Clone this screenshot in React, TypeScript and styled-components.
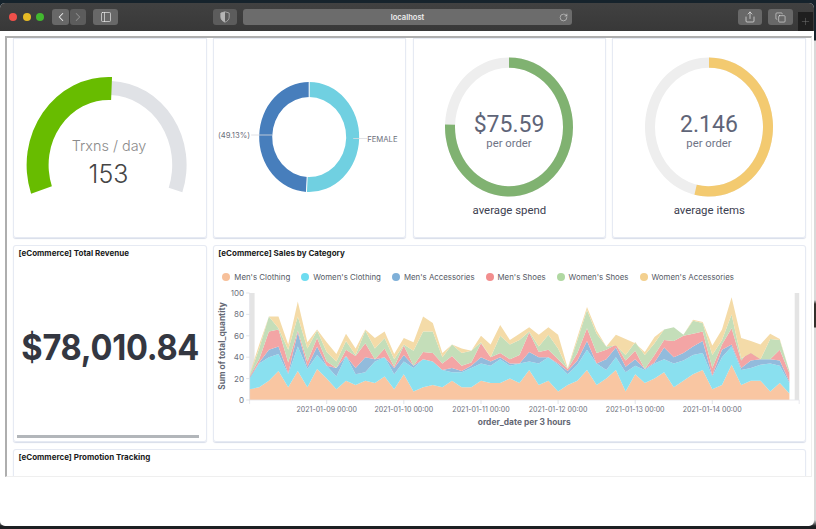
import React from "react";
import styled, { createGlobalStyle } from "styled-components";
import { ChevronLeft, ChevronRight, PanelLeft, Share, Copy, RotateCw, Plus } from "lucide-react";

const Global = createGlobalStyle`
  html, body { margin: 0; padding: 0; height: 100%; overflow: hidden; }
  body {
    background: linear-gradient(180deg, #16232c 0, #16232c 40px, #d9d9d9 41px, #d9d9d9 300px, #33302c 304px, #33302c 327px, #d9d9d9 328px, #d9d9d9 520px, #1d1f22 526px);
    font-family: "Inter", "Liberation Sans", sans-serif;
  }
  #root { height: 100%; }
`;

const Desktop = styled.div`
  width: 816px;
  height: 529px;
  padding: 3px 2px 3px 0;
  box-sizing: border-box;
`;

const Win = styled.div`
  height: 523px;
  display: flex;
  flex-direction: column;
  background: #fff;
  border-radius: 5px;
  overflow: hidden;
`;

const Toolbar = styled.header`
  height: 28px;
  flex: none;
  display: flex;
  align-items: center;
  background: linear-gradient(180deg, #414141, #383838);
  padding: 0 0 0 9px;
  box-sizing: border-box;
`;

const Light = styled.span<{ $c: string }>`
  width: 8px;
  height: 8px;
  border-radius: 50%;
  background: ${(p) => p.$c};
  margin-right: 5.5px;
  flex: none;
`;

const ToolButton = styled.button<{ $w: number; $ml?: number; $dim?: boolean }>`
  width: ${(p) => p.$w}px;
  height: 16px;
  margin: 0 0 0 ${(p) => p.$ml ?? 0}px;
  flex: none;
  padding: 0;
  border: 0;
  border-radius: 3px;
  background: ${(p) => (p.$dim ? "#5c5c5c" : "#686868")};
  color: ${(p) => (p.$dim ? "#8d8d8d" : "#f0f0f0")};
  display: flex;
  align-items: center;
  justify-content: center;
`;

const UrlBar = styled.div`
  width: 329px;
  height: 16px;
  margin-left: 6px;
  flex: none;
  border-radius: 3px;
  background: #6c6c6c;
  color: #f0f0f0;
  display: flex;
  align-items: center;
  justify-content: flex-end;
  padding-right: 4px;
  box-sizing: border-box;
  position: relative;
`;

const UrlText = styled.span`
  position: absolute;
  left: 0;
  right: 0;
  text-align: center;
  font: 600 7.6px "Inter", sans-serif;
  color: #ececec;
`;

const NewTab = styled.div`
  width: 15px;
  height: 19px;
  margin: 9px 0 0 5px;
  flex: none;
  background: #1f1f1f;
  color: #7d7d7d;
  display: flex;
  align-items: center;
  justify-content: center;
`;

const Body = styled.main`
  flex: 1;
  padding: 5px 2px 0 5px;
`;

const Frame = styled.div`
  height: 441px;
  box-sizing: border-box;
  border: 1.5px solid #efefef;
  border-top: 2px solid #aeaeae;
  border-left: 2px solid #aeaeae;
  overflow: hidden;
  padding: 0 5px 0 6px;
  display: grid;
  grid-template-columns: repeat(4, 1fr);
  grid-template-rows: 200px 197px 100px;
  column-gap: 6.33px;
  row-gap: 7px;
`;

const Card = styled.section<{ $span?: number; $open?: boolean }>`
  grid-column: span ${(p) => p.$span ?? 1};
  background: #fff;
  border-radius: ${(p) => (p.$open ? "0 0 3px 3px" : "3px")};
  box-shadow: inset 0 0 0 1px #e6eaf3, 0 1px 1px #d8dde9;
  display: flex;
  flex-direction: column;
  min-width: 0;
  position: relative;
`;

const Title = styled.h3`
  margin: 0;
  padding: 4px 5.5px 0;
  font: 700 8px/9px "Inter", sans-serif;
  color: #1a1c21;
  white-space: nowrap;
`;

const FullSvg = styled.svg`
  display: block;
  width: 100%;
  height: 100%;
`;

const RingCard = styled(Card)`
  align-items: center;
  padding-top: 19px;
`;

const RingSvg = styled.svg`
  display: block;
  width: 130px;
  height: 141px;
  flex: none;
`;

const Caption = styled.div`
  margin-top: 4.5px;
  font: 400 11.4px/14px "Roboto", sans-serif;
  color: #3c4050;
`;

const Metric = styled.div`
  flex: 1;
  display: flex;
  align-items: center;
  justify-content: center;
  color: #343741;
`;

const MetricValue = styled.span`
  font: 700 36px/1 "Inter", sans-serif;
  letter-spacing: -0.3px;
  white-space: nowrap;
  transform: scaleX(0.905);
`;

const HScroll = styled.div`
  height: 3px;
  margin: 0 8px 4px 4px;
  background: #b2b6ba;
  flex: none;
`;

const Legend = styled.ul`
  list-style: none;
  margin: 14px 0 0;
  padding: 0 0 0 9.5px;
  display: flex;
  gap: 11px;
  height: 10px;
  align-items: center;
`;

const LegendItem = styled.li`
  display: flex;
  align-items: center;
  gap: 4px;
  font: 400 7.85px/10px "Inter", sans-serif;
  color: #555a66;
  white-space: nowrap;
`;

const Dot = styled.i<{ $c: string }>`
  width: 8px;
  height: 8px;
  border-radius: 50%;
  background: ${(p) => p.$c};
`;

const PlotSvg = styled.svg`
  display: block;
  width: 593.5px;
  height: 150px;
  margin-top: 3px;
  flex: none;
`;

const GaugeLabel = styled.text`
  font: 300 14.4px "Inter", sans-serif;
  fill: #8b8b8b;
  text-anchor: middle;
`;
const GaugeValue = styled.text`
  font: 300 25px "Inter", sans-serif;
  fill: #454545;
  text-anchor: middle;
`;
const SliceLabel = styled.text`
  font: 400 7.7px "Inter", sans-serif;
  fill: #6a6e7a;
`;
const RingValue = styled.text`
  font: 400 23px "Roboto", sans-serif;
  fill: #5f6578;
  text-anchor: middle;
`;
const RingSub = styled.text`
  font: 400 11.3px "Roboto", sans-serif;
  fill: #6f7486;
  text-anchor: middle;
`;
const AxisText = styled.text<{ $anchor?: string; $size?: number }>`
  font: 400 ${(p) => p.$size ?? 8}px "Inter", sans-serif;
  fill: #6c707c;
  text-anchor: ${(p) => p.$anchor ?? "middle"};
`;
const AxisTitle = styled.text`
  font: 700 8.4px "Inter", sans-serif;
  fill: #646874;
  text-anchor: middle;
`;

const rad = (d: number) => (d * Math.PI) / 180;
/* angle in degrees, clockwise from 12 o'clock */
const pt = (cx: number, cy: number, rx: number, ry: number, a: number) =>
  `${(cx + rx * Math.sin(rad(a))).toFixed(2)} ${(cy - ry * Math.cos(rad(a))).toFixed(2)}`;

function sector(cx: number, cy: number, rx: number, ry: number, irx: number, iry: number, from: number, to: number) {
  const large = to - from > 180 ? 1 : 0;
  return `M${pt(cx, cy, rx, ry, from)}A${rx} ${ry} 0 ${large} 1 ${pt(cx, cy, rx, ry, to)}L${pt(cx, cy, irx, iry, to)}A${irx} ${iry} 0 ${large} 0 ${pt(cx, cy, irx, iry, from)}Z`;
}

function Gauge() {
  const cx = 108.6, cy = 165;
  return (
    <FullSvg viewBox="13 38 193.5 200">
      <path d={sector(cx, cy, 78, 84, 63.6, 70, 2, 109)} fill="#e0e2e6" />
      <path d={sector(cx, cy, 82, 88, 60, 65, -109, 2.4)} fill="#68bc00" />
      <GaugeLabel x={109} y={151}>Trxns / day</GaugeLabel>
      <GaugeValue x={108.5} y={183}>153</GaugeValue>
    </FullSvg>
  );
}

function Donut() {
  const cx = 309, cy = 137;
  const split = 180 + 0.0087 * 360;
  return (
    <FullSvg viewBox="212.8 38 193.5 200">
      <path d={sector(cx, cy, 50, 55, 37, 40, 0, split)} fill="#70d0e1" />
      <path d={sector(cx, cy, 50, 55, 37, 40, split, 360)} fill="#477ebc" />
      <path d={`M${pt(cx, cy, 36, 39, split)}L${pt(cx, cy, 51, 56, split)}M${cx} 81V97`} stroke="#fff" strokeWidth="1" />
      <path d="M251 135H272M353 138.5H367" stroke="#d9dbe0" strokeWidth="0.8" fill="none" />
      <SliceLabel x={217.7} y={138}>(49.13%)</SliceLabel>
      <SliceLabel x={367} y={141.5}>FEMALE</SliceLabel>
    </FullSvg>
  );
}

function Ring({ pct, color, value }: { pct: number; color: string; value: string }) {
  const cx = 65, cy = 70;
  return (
    <RingSvg viewBox="0 0 130 141">
      <path d={sector(cx, cy, 64, 69.5, 54, 59.2, 0, 359.99)} fill="#eeeeee" />
      <path d={sector(cx, cy, 64, 69.5, 54, 59.2, 0, pct * 360)} fill={color} />
      <RingValue x={cx} y={75}>{value}</RingValue>
      <RingSub x={cx} y={89.5}>per order</RingSub>
    </RingSvg>
  );
}

const X0 = 249.4, STEP = 9.64, Y0 = 400, K = 1.07;
const series: { name: string; fill: string; dot: string; top: number[] }[] = [
  { name: "Men's Clothing", fill: "#f9c6a2", dot: "#f7c09a",
    top: [10,12,18,27,12,27,12,29,20,10,18,14,18,16,22,10,24,8,12,14,12,18,12,12,18,16,16,20,16,28,14,18,8,14,18,28,14,20,28,8,24,16,20,26,12,18,24,28,10,14,33,14,18,18,8,16,6] },
  { name: "Women's Clothing", fill: "#8ae0ef", dot: "#6edcf0",
    top: [20,34,40,43,24,50,29,42,32,22,41,24,26,36,40,24,36,30,38,36,28,26,26,30,34,32,38,32,34,36,34,40,33,24,33,47,34,28,40,26,32,28,34,38,34,37,42,44,22,40,50,28,30,33,34,32,16] },
  { name: "Men's Accessories", fill: "#92bbdc", dot: "#7fb0d8",
    top: [21,35,47,50,25,63,31,50,32,30,41,30,40,38,40,30,42,32,38,36,28,30,27,32,40,36,40,34,34,45,40,40,34,27,37,55,34,38,49,31,38,29,35,49,40,44,50,55,23,47,52,30,37,38,38,37,17] },
  { name: "Men's Shoes", fill: "#f3a5a5", dot: "#f28e8e",
    top: [22,38,64,66,35,65,36,58,36,30,47,41,53,38,48,31,51,32,45,44,34,41,32,35,53,40,44,38,42,63,45,47,38,29,44,67,44,47,52,37,46,29,42,56,55,60,62,64,30,52,67,37,48,38,38,47,25] },
  { name: "Women's Shoes", fill: "#c4deb9", dot: "#b0d8a2",
    top: [23,48,78,67,47,78,48,65,45,36,55,42,65,48,58,38,52,46,64,64,40,52,44,46,54,40,60,52,56,64,50,61,48,29,56,84,62,50,51,42,54,42,53,66,68,61,74,72,42,56,80,39,44,38,57,56,27] },
  { name: "Women's Accessories", fill: "#f4dba8", dot: "#f3d08f",
    top: [24,52,78,78,52,92,54,66,54,43,62,48,66,58,64,43,58,54,78,72,44,52,48,46,60,52,70,56,62,68,61,68,61,30,59,87,65,50,61,57,53,45,59,66,68,61,75,73,51,66,96,58,55,52,62,57,27] },
];

const px = (i: number) => (X0 + STEP * i).toFixed(1);
const py = (v: number) => (Y0 - K * v).toFixed(1);

function band(top: number[], bottom: number[] | null) {
  const up = top.map((v, i) => `${px(i)},${py(v)}`);
  const down = bottom
    ? bottom.map((v, i) => `${px(i)},${py(v)}`).reverse()
    : [`${px(56)},${Y0}`, `${X0},${Y0}`];
  return [...up, ...down].join(" ");
}

const days = ["2021-01-09", "2021-01-10", "2021-01-11", "2021-01-12", "2021-01-13", "2021-01-14"];

function Plot() {
  return (
    <PlotSvg viewBox="212.8 285 593.5 150">
      <rect x={249.4} y={293} width={5} height={107} fill="#e4e4e4" />
      <rect x={794.5} y={293} width={4.5} height={107} fill="#e4e4e4" />
      {series.map((s, i) => (
        <polygon key={s.name} points={band(s.top, i ? series[i - 1].top : null)} fill={s.fill} />
      ))}
      <path d="M249.4 293V404M249.4 400H799M799 400V404" stroke="#e3e5ea" strokeWidth="0.8" fill="none" />
      {[0, 20, 40, 60, 80, 100].map((v) => (
        <g key={v}>
          <path d={`M246 ${py(v)}H249.4`} stroke="#d5d8de" strokeWidth="0.7" />
          <AxisText $anchor="end" x={243.8} y={Number(py(v)) + 3}>{v}</AxisText>
        </g>
      ))}
      {days.map((d, i) => (
        <g key={d}>
          <path d={`M${px(8 * (i + 1))} 400V404`} stroke="#d5d8de" strokeWidth="0.7" />
          <AxisText $size={7.05} x={Number(px(8 * (i + 1)))} y={412}>{d} 00:00</AxisText>
        </g>
      ))}
      <AxisTitle transform="translate(225 346) rotate(-90)">Sum of total_quantity</AxisTitle>
      <AxisTitle x={524} y={425}>order_date per 3 hours</AxisTitle>
    </PlotSvg>
  );
}

function Shield() {
  return (
    <svg width="10" height="12" viewBox="0 0 10 12">
      <path d="M5 .8 9.2 2v4c0 2.6-1.8 4.2-4.2 5.2C2.600 10.200.8 8.600.8 6V2Z" fill="none" stroke="#a8a8a8" strokeWidth="0.9" />
      <path d="M5 .8V11.200C2.600 10.200.8 8.600.8 6V2Z" fill="#b5b5b5" />
    </svg>
  );
}

export default function App() {
  return (
    <>
      <Global />
      <Desktop>
        <Win>
          <Toolbar>
            <Light $c="#f0504a" />
            <Light $c="#e7bb25" />
            <Light $c="#42b82f" />
            <ToolButton $w={17} $ml={2.5}><ChevronLeft size={14} strokeWidth={1.8} /></ToolButton>
            <ToolButton $w={16} $ml={1} $dim><ChevronRight size={14} strokeWidth={1.8} /></ToolButton>
            <ToolButton $w={25} $ml={7}><PanelLeft size={12} strokeWidth={1.3} /></ToolButton>
            <ToolButton $w={24} $ml={95} $dim><Shield /></ToolButton>
            <UrlBar>
              <UrlText>localhost</UrlText>
              <RotateCw size={9} strokeWidth={1.3} />
            </UrlBar>
            <ToolButton $w={24} $ml={166}><Share size={12} strokeWidth={1.3} /></ToolButton>
            <ToolButton $w={25} $ml={6}><Copy size={11} strokeWidth={1.2} /></ToolButton>
            <NewTab><Plus size={11} strokeWidth={1} /></NewTab>
          </Toolbar>
          <Body>
            <Frame>
              <Card $open><Gauge /></Card>
              <Card $open><Donut /></Card>
              <RingCard $open>
                <Ring pct={0.7559} color="#80b271" value="$75.59" />
                <Caption>average spend</Caption>
              </RingCard>
              <RingCard $open>
                <Ring pct={0.5365} color="#f3ca70" value="2.146" />
                <Caption>average items</Caption>
              </RingCard>
              <Card>
                <Title>[eCommerce] Total Revenue</Title>
                <Metric><MetricValue>$78,010.84</MetricValue></Metric>
                <HScroll />
              </Card>
              <Card $span={3}>
                <Title>[eCommerce] Sales by Category</Title>
                <Legend>
                  {series.map((s) => (
                    <LegendItem key={s.name}><Dot $c={s.dot} />{s.name}</LegendItem>
                  ))}
                </Legend>
                <Plot />
              </Card>
              <Card $span={4}>
                <Title>[eCommerce] Promotion Tracking</Title>
              </Card>
            </Frame>
          </Body>
        </Win>
      </Desktop>
    </>
  );
}
